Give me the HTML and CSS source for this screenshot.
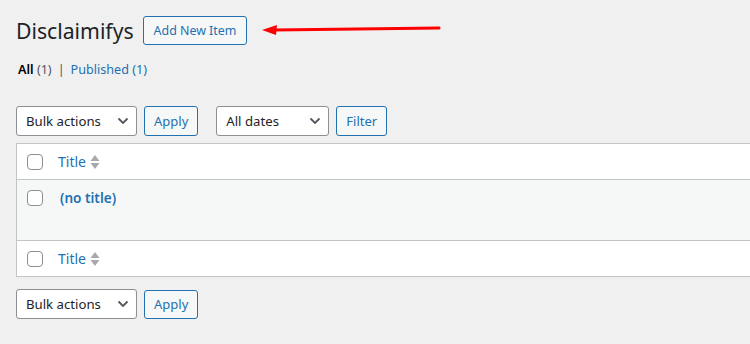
FILE: index.html
```html
<!DOCTYPE html>
<html lang="en">
  <head>
    <meta charset="UTF-8" />
    <title>Disclaimifys</title>
    <link rel="stylesheet" href="styles.css">
  </head>
  <body>
    <div class="wrap">
      <div class="page-head">
        <h1>Disclaimifys</h1>
        <a href="#" class="page-title-action">Add New Item</a>
        <svg class="red-arrow" width="182" height="12" viewBox="0 0 182 12">
          <polygon points="0,7 15,2 14,12" fill="#f00" />
          <path d="M12 7 L177 5" stroke="#f00" stroke-width="3" stroke-linecap="round" />
        </svg>
      </div>

      <ul class="subsubsub">
        <li class="current">All <span class="count">(1)</span></li>
        <li class="sep">|</li>
        <li><a href="#">Published <span class="count">(1)</span></a></li>
      </ul>

      <div class="tablenav top">
        <div class="select bulk">
          <span>Bulk actions</span>
          <svg width="12" height="8" viewBox="0 0 12 8"><path d="M1.5 1.5 L6 6 L10.5 1.5" fill="none" stroke="#50575e" stroke-width="1.8" /></svg>
        </div>
        <button class="button">Apply</button>
        <div class="select dates">
          <span>All dates</span>
          <svg width="12" height="8" viewBox="0 0 12 8"><path d="M1.5 1.5 L6 6 L10.5 1.5" fill="none" stroke="#50575e" stroke-width="1.8" /></svg>
        </div>
        <button class="button">Filter</button>
      </div>

      <div class="list-table">
        <div class="row head">
          <span class="check"></span>
          <a href="#" class="sort">Title
            <svg width="10" height="16" viewBox="0 0 10 16"><polygon points="5,1 9.5,7 0.5,7" fill="#a7aaad" /><polygon points="0.5,9 9.5,9 5,15" fill="#a7aaad" /></svg>
          </a>
        </div>
        <div class="row item">
          <span class="check"></span>
          <a href="#" class="row-title">(no title)</a>
        </div>
        <div class="row foot">
          <span class="check"></span>
          <a href="#" class="sort">Title
            <svg width="10" height="16" viewBox="0 0 10 16"><polygon points="5,1 9.5,7 0.5,7" fill="#a7aaad" /><polygon points="0.5,9 9.5,9 5,15" fill="#a7aaad" /></svg>
          </a>
        </div>
      </div>

      <div class="tablenav bottom">
        <div class="select bulk">
          <span>Bulk actions</span>
          <svg width="12" height="8" viewBox="0 0 12 8"><path d="M1.5 1.5 L6 6 L10.5 1.5" fill="none" stroke="#50575e" stroke-width="1.8" /></svg>
        </div>
        <button class="button">Apply</button>
      </div>
    </div>
  </body>
</html>
```

FILE: styles.css
```css
body {
  margin: 0;
  background-color: #f0f0f1;
  color: #1d2327;
  font-family: "Noto Sans", "Open Sans", sans-serif;
  font-size: 13px;
  overflow: hidden;
}

a {
  color: #2271b1;
  text-decoration: none;
}

.wrap {
  padding: 16px 0 0 16px;
  width: 900px;
}

.page-head {
  display: flex;
  align-items: center;
  height: 29px;
}

.page-head h1 {
  margin: 0 9px 0 0;
  font-size: 21.2px;
  font-weight: 400;
  line-height: 29px;
}

.page-title-action {
  display: inline-block;
  box-sizing: border-box;
  height: 29px;
  line-height: 27px;
  padding: 0 10px;
  border: 1px solid #2271b1;
  border-radius: 3px;
  background-color: #f6f7f7;
  font-size: 12.4px;
}

.red-arrow {
  margin-left: 15px;
  margin-top: -3px;
}

.subsubsub {
  list-style: none;
  margin: 17px 0 0 2px;
  padding: 0;
  display: flex;
  gap: 6px;
  line-height: 16px;
  font-size: 12.6px;
}

.subsubsub .current {
  color: #000;
  font-weight: 600;
}

.subsubsub .count {
  font-weight: 400;
  color: #50575e;
}

.subsubsub a .count {
  color: #2271b1;
}

.subsubsub .sep {
  color: #50575e;
}

.tablenav {
  display: flex;
  align-items: center;
  gap: 7px;
}

.tablenav.top {
  margin-top: 28px;
}

.tablenav.bottom {
  margin-top: 12px;
}

.select {
  box-sizing: border-box;
  height: 30px;
  display: flex;
  align-items: center;
  justify-content: space-between;
  padding: 0 7px 0 9px;
  border: 1px solid #8c8f94;
  border-radius: 3px;
  background-color: #fff;
  font-size: 13.2px;
}

.bulk {
  width: 121px;
}

.dates {
  width: 113px;
  margin-left: 11px;
}

.button {
  box-sizing: border-box;
  height: 30px;
  padding: 0 9px;
  border: 1px solid #2271b1;
  border-radius: 3px;
  background-color: #f6f7f7;
  color: #2271b1;
  font-family: inherit;
  font-size: 13px;
}

.tablenav.bottom .button {
  height: 29px;
}

.list-table {
  margin-top: 7px;
  border: 1px solid #c3c4c7;
  border-right: none;
  background-color: #fff;
}

.row {
  display: flex;
  align-items: center;
}

.row.head {
  height: 35px;
  border-bottom: 1px solid #c3c4c7;
}

.row.item {
  height: 60px;
  align-items: flex-start;
  background-color: #f6f7f7;
}

.row.foot {
  height: 35px;
  border-top: 1px solid #c3c4c7;
}

.check {
  box-sizing: border-box;
  width: 16px;
  height: 16px;
  margin: 0 15px 0 10px;
  border: 1px solid #8c8f94;
  border-radius: 4px;
  background-color: #fff;
}

.row.item .check {
  margin-top: 10px;
}

.sort {
  display: flex;
  align-items: center;
  gap: 4px;
  font-size: 14px;
}

.row-title {
  margin: 8px 0 0 2px;
  font-size: 13.6px;
  font-weight: 600;
}
```
